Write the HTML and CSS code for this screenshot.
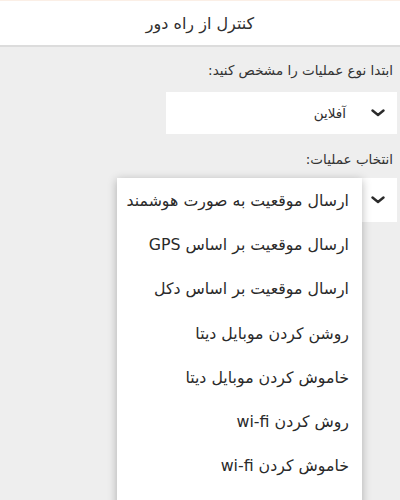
FILE: index.html
```html
<!DOCTYPE html>
<html lang="fa" dir="rtl">
<head>
<meta charset="utf-8">
<link rel="stylesheet" href="styles.css">
</head>
<body>
<header class="topbar">کنترل از راه دور</header>
<main class="content">
  <label class="field-label">ابتدا نوع عملیات را مشخص کنید:</label>
  <div class="select">
    <svg class="chev" width="14" height="8" viewBox="0 0 14 8"><path d="M1.5 1.5 L7 6 L12.5 1.5" fill="none" stroke="#2b2b2b" stroke-width="2.4" stroke-linecap="round" stroke-linejoin="round"/></svg>
    <span class="select-value">آفلاین</span>
  </div>
  <label class="field-label second">انتخاب عملیات:</label>
  <div class="select-wrap">
    <div class="select">
      <svg class="chev" width="14" height="8" viewBox="0 0 14 8"><path d="M1.5 1.5 L7 6 L12.5 1.5" fill="none" stroke="#2b2b2b" stroke-width="2.4" stroke-linecap="round" stroke-linejoin="round"/></svg>
      <span class="select-value"></span>
    </div>
    <ul class="menu">
      <li class="menu-item">ارسال موقعیت به صورت هوشمند</li>
      <li class="menu-item">ارسال موقعیت بر اساس GPS</li>
      <li class="menu-item">ارسال موقعیت بر اساس دکل</li>
      <li class="menu-item">روشن کردن موبایل دیتا</li>
      <li class="menu-item">خاموش کردن موبایل دیتا</li>
      <li class="menu-item">روش کردن wi-fi</li>
      <li class="menu-item">خاموش کردن wi-fi</li>
      <li class="menu-item"></li>
    </ul>
  </div>
</main>
</body>
</html>
```
FILE: styles.css
```css
html, body {
  margin: 0;
  padding: 0;
  height: 100%;
  overflow: hidden;
}
body {
  background: #eeeeee;
  font-family: "DejaVu Sans", sans-serif;
  color: #333;
  direction: rtl;
}
.topbar {
  background: #fff;
  border-top: 1px solid #fbefe6;
  border-bottom: 2px solid #dcdcdc;
  box-sizing: border-box;
  height: 47px;
  display: flex;
  align-items: center;
  justify-content: center;
  font-size: 16px;
  color: #2e2e2e;
}
.content {
  padding: 14px 3px 0 0;
}
.field-label {
  display: block;
  font-size: 13.5px;
  color: #333;
  padding-right: 4px;
  line-height: 18px;
}
.field-label.second {
  margin-top: 16px;
}
.select {
  margin-top: 13px;
  width: 231px;
  height: 42px;
  background: #fff;
  display: flex;
  align-items: center;
  gap: 25px;
  padding-right: 12px;
  box-sizing: border-box;
}
.select-wrap {
  position: relative;
  margin-top: 10px;
}
.select-wrap .select {
  margin-top: 0;
  height: 44px;
}
.chev {
  flex: none;
}
.select-value {
  font-size: 13.5px;
  color: #2e2e2e;
}
.menu {
  position: absolute;
  top: 0;
  right: 35px;
  width: 245px;
  margin: 0;
  padding: 0;
  list-style: none;
  background: #fff;
  box-shadow: 0 2px 9px rgba(0,0,0,0.28);
}
.menu-item {
  height: 44.3px;
  display: flex;
  align-items: center;
  padding-right: 13px;
  font-size: 15.8px;
  color: #2a2a2a;
}
```
